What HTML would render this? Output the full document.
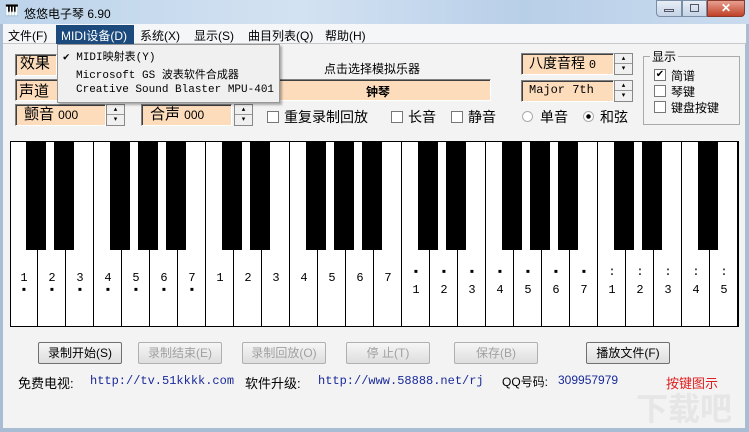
<!DOCTYPE html>
<html><head><meta charset="utf-8"><style>
*{box-sizing:border-box;margin:0;padding:0}
html,body{width:749px;height:432px;overflow:hidden}
body{background:#f3f3f3;font-family:"Liberation Sans","Noto Sans CJK SC",sans-serif;font-size:12px;position:relative;color:#000}
.a{position:absolute;white-space:nowrap}
.title{left:0;top:0;width:749px;height:24px;background:linear-gradient(90deg,#bcd3ea,#d3e2f2 40%,#b8cfe8 70%,#cadbee);}
.menu{left:3px;top:24px;width:743px;height:20px;background:#f5f6f8;border-bottom:1px solid #c8c8c8}
.mi{top:27px;font-size:12px}
.field{background:#fddcbc;border:1px solid;border-color:#808080 #fff #fff #808080;box-shadow:inset 1px 1px 0 #404040}
.spin{width:19px;background:#f0f0f0;border:1px solid #888}
.spin div{height:50%;border-bottom:1px solid #999;font-size:7px;text-align:center;line-height:9px}
.cb{width:12px;height:12px;border:1px solid #777;background:#fff}
.btn{height:22px;border:1px solid #707070;background:linear-gradient(#f6f6f6,#dedede);border-radius:2px;text-align:center;line-height:20px;font-size:12px}
.dis{color:#a0a0a0;border-color:#b0b0b0}
.kb{left:10px;top:141px;width:729px;height:186px;border:1px solid #000;background:#fff}
.wk{position:absolute;top:0;height:184px;border-right:1px solid #000;width:28px}
.bk{position:absolute;top:0;width:20px;height:108px;background:#000}
.lb{position:absolute;width:28px;text-align:center;font-family:"Liberation Mono",monospace;font-size:12px;line-height:12px}
.mono{font-family:"Liberation Mono","Noto Sans CJK SC",monospace}
</style></head><body>
<div class="a title"></div>
<div class="a" style="left:5px;top:4px;font-size:11px;font-weight:bold;color:#333">🎹</div>
<div class="a" style="left:24px;top:5px;font-size:12px">悠悠电子琴 6.90</div>
<div class="a" style="left:656px;top:0;width:26px;height:17px;border:1px solid #7a8ea8;border-radius:0 0 0 4px;background:linear-gradient(#e8eef6,#c4d3e6)"></div>
<div class="a" style="left:682px;top:0;width:25px;height:17px;border:1px solid #7a8ea8;background:linear-gradient(#e8eef6,#c4d3e6)"></div>
<div class="a" style="left:707px;top:0;width:38px;height:17px;border:1px solid #8a3a2a;border-radius:0 0 4px 0;background:linear-gradient(#e8a090,#c04028);color:#fff;text-align:center;font-weight:bold;line-height:15px">✕</div>
<div class="a" style="left:664px;top:9px;width:10px;height:3px;border:1px solid #556"></div>
<div class="a" style="left:690px;top:4px;width:9px;height:8px;border:1px solid #556"></div>
<div class="a" style="left:0;top:24px;width:3px;height:408px;background:#a8bcd4"></div>
<div class="a" style="left:745px;top:24px;width:4px;height:408px;background:#a8bcd4"></div>
<div class="a" style="left:0;top:428px;width:749px;height:4px;background:#a8bcd4"></div>
<div class="a menu"></div>
<div class="a mi" style="left:8px">文件(F)</div>
<div class="a" style="left:56px;top:25px;width:78px;height:19px;background:#1c4a7c"></div>
<div class="a mi" style="left:61px;color:#fff">MIDI设备(D)</div>
<div class="a mi" style="left:140px">系统(X)</div>
<div class="a mi" style="left:194px">显示(S)</div>
<div class="a mi" style="left:248px">曲目列表(Q)</div>
<div class="a mi" style="left:325px">帮助(H)</div>

<div class="a field" style="left:15px;top:54px;width:42px;height:22px;font-size:15px;padding-left:4px;line-height:18px">效果</div>
<div class="a" style="left:324px;top:60px">点击选择模拟乐器</div>
<div class="a field" style="left:15px;top:79px;width:476px;height:22px"></div>
<div class="a" style="left:19px;top:80px;font-size:15px">声道</div>
<div class="a" style="left:366px;top:83px;font-weight:bold">钟琴</div>
<div class="a field" style="left:15px;top:104px;width:91px;height:22px;font-size:15px;padding-left:8px;line-height:19px">颤音 <span style="font-size:12px">000</span></div>
<div class="a spin" style="left:106px;top:104px;height:22px"><div>▴</div><div style="border:0">▾</div></div>
<div class="a field" style="left:141px;top:104px;width:91px;height:22px;font-size:15px;padding-left:8px;line-height:19px">合声 <span style="font-size:12px">000</span></div>
<div class="a spin" style="left:234px;top:104px;height:22px"><div>▴</div><div style="border:0">▾</div></div>
<div class="a cb" style="left:267px;top:111px"></div><div class="a" style="left:284px;top:107px;font-size:14px">重复录制回放</div>
<div class="a cb" style="left:391px;top:111px"></div><div class="a" style="left:408px;top:107px;font-size:14px">长音</div>
<div class="a cb" style="left:451px;top:111px"></div><div class="a" style="left:468px;top:107px;font-size:14px">静音</div>
<div class="a" style="left:522px;top:111px;width:11px;height:11px;border:1px solid #aaa;border-radius:50%;background:#fff"></div><div class="a" style="left:540px;top:107px;font-size:14px">单音</div>
<div class="a" style="left:583px;top:111px;width:11px;height:11px;border:1px solid #aaa;border-radius:50%;background:radial-gradient(#000 2px,#fff 2.5px)"></div><div class="a" style="left:600px;top:107px;font-size:14px">和弦</div>

<div class="a field" style="left:521px;top:53px;width:93px;height:22px;font-size:14px;padding-left:7px;line-height:19px">八度音程 <span class="mono" style="font-size:12px">0</span></div>
<div class="a spin" style="left:614px;top:53px;height:22px"><div>▴</div><div style="border:0">▾</div></div>
<div class="a field mono" style="left:521px;top:80px;width:93px;height:22px;padding-left:7px;line-height:19px">Major 7th</div>
<div class="a spin" style="left:614px;top:80px;height:22px"><div>▴</div><div style="border:0">▾</div></div>
<div class="a" style="left:643px;top:56px;width:97px;height:69px;border:1px solid #aaa"></div>
<div class="a" style="left:650px;top:48px;background:#f3f3f3;padding:0 2px">显示</div>
<div class="a cb" style="left:654px;top:69px;text-align:center;font-size:10px;line-height:10px">✔</div><div class="a" style="left:671px;top:67px">简谱</div>
<div class="a cb" style="left:654px;top:85px"></div><div class="a" style="left:671px;top:83px">琴键</div>
<div class="a cb" style="left:654px;top:101px"></div><div class="a" style="left:671px;top:99px">键盘按键</div>

<div class="a" style="left:57px;top:44px;width:223px;height:59px;background:#f0f0f0;border:1px solid #979797;box-shadow:2px 2px 2px rgba(0,0,0,.3)"></div>
<div class="a mono" style="left:63px;top:48px;font-size:11px">✔ MIDI映射表(Y)</div>
<div class="a mono" style="left:76px;top:66px;font-size:11px">Microsoft GS 波表软件合成器</div>
<div class="a mono" style="left:76px;top:84px;font-size:11px">Creative Sound Blaster MPU-401</div>

<div class="a kb" id="kb"></div>

<div class="a btn" style="left:38px;top:342px;width:84px">录制开始(S)</div>
<div class="a btn dis" style="left:138px;top:342px;width:84px">录制结束(E)</div>
<div class="a btn dis" style="left:242px;top:342px;width:84px">录制回放(O)</div>
<div class="a btn dis" style="left:346px;top:342px;width:84px">停 止(T)</div>
<div class="a btn dis" style="left:454px;top:342px;width:84px">保存(B)</div>
<div class="a btn" style="left:586px;top:342px;width:84px">播放文件(F)</div>
<div class="a" style="left:18px;top:373px;font-size:13px">免费电视:</div>
<div class="a mono" style="left:90px;top:374px;color:#1a2a9a">http://tv.51kkkk.com</div>
<div class="a" style="left:245px;top:373px;font-size:13px">软件升级:</div>
<div class="a mono" style="left:318px;top:374px;color:#1a2a9a">http://www.58888.net/rj</div>
<div class="a" style="left:502px;top:373px">QQ号码:</div>
<div class="a" style="left:558px;top:373px;color:#1a2a9a">309957979</div>
<div class="a" style="left:666px;top:373px;color:#e02020;font-size:13px">按键图示</div>
<div class="a" style="left:636px;top:384px;font-size:32px;color:#e6e6e6;font-weight:bold">下载吧</div>
<script>
var kb=document.getElementById('kb'),h='';
var nums=[1,2,3,4,5,6,7];
for(var i=0;i<26;i++){
 h+='<div class="wk" style="left:'+(i*28-1)+'px"></div>';
 var n=nums[i%7],x=i*28-1,o=Math.floor(i/7);
 if(o==0) h+='<div class="lb" style="left:'+x+'px;top:130px">'+n+'<br>▪</div>';
 else if(o==1) h+='<div class="lb" style="left:'+x+'px;top:130px">'+n+'</div>';
 else if(o==2) h+='<div class="lb" style="left:'+x+'px;top:124px">▪<br><span style="position:relative;top:6px">'+n+'</span></div>';
 else h+='<div class="lb" style="left:'+x+'px;top:124px">:<br><span style="position:relative;top:6px">'+n+'</span></div>';
}
for(var i=1;i<26;i++){var m=i%7; if(m==1||m==2||m==4||m==5||m==6) h+='<div class="bk" style="left:'+(i*28-13)+'px"></div>';}
kb.innerHTML=h;
</script>
</body></html>
